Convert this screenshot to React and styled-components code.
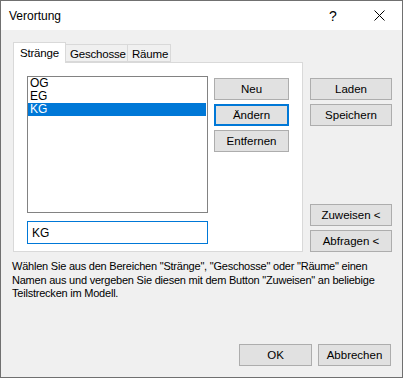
import React from 'react';
import styled, { createGlobalStyle } from 'styled-components';

const Global = createGlobalStyle`
  html, body { margin: 0; padding: 0; background: #fff; }
  body { font-family: "Liberation Sans", Arial, sans-serif; font-size: 11.5px; color: #000; }
  * { box-sizing: border-box; }
`;

const Window = styled.div`
  width: 403px;
  height: 378px;
  border: 1px solid #707070;
  background: #f0f0f0;
  display: flex;
  flex-direction: column;
`;

const TitleBar = styled.div`
  height: 29px;
  background: #fff;
  display: flex;
  align-items: center;
  padding-left: 8px;
`;

const Title = styled.div`
  flex: 1;
  font-size: 12px;
  padding-top: 1px;
`;

const TitleButton = styled.div`
  width: 46px;
  height: 29px;
  display: flex;
  align-items: center;
  justify-content: center;
  font-size: 14px;
`;

const Body = styled.div`
  flex: 1;
  display: flex;
  flex-direction: column;
  padding: 12px 10px 11px 12px;
`;

const MainRow = styled.div`
  display: flex;
  height: 210px;
`;

const TabControl = styled.div`
  width: 290px;
  display: flex;
  flex-direction: column;
`;

const TabStrip = styled.div`
  height: 20px;
  display: flex;
  align-items: flex-end;
  position: relative;
  z-index: 1;
`;

const Tab = styled.div`
  width: ${p => p.$w}px;
  height: ${p => (p.$active ? 21 : 18)}px;
  margin-bottom: ${p => (p.$active ? -1 : 0)}px;
  margin-left: ${p => (p.$first ? 0 : -1)}px;
  border: 1px solid #d9d9d9;
  border-bottom: ${p => (p.$active ? 'none' : '1px solid #d9d9d9')};
  background: ${p => (p.$active ? '#fff' : '#f0f0f0')};
  display: flex;
  align-items: center;
  padding-left: ${p => (p.$active ? 6 : 4)}px;
  padding-top: ${p => (p.$active ? 0 : 1)}px;
  white-space: nowrap;
  letter-spacing: -0.2px;
`;

const Pane = styled.div`
  flex: 1;
  border: 1px solid #d9d9d9;
  background: #fff;
  display: flex;
  padding: 13px 0 7px 13px;
`;

const LeftCol = styled.div`
  width: 181px;
  display: flex;
  flex-direction: column;
  gap: 8px;
`;

const ListBox = styled.div`
  height: 137px;
  border: 1px solid #828282;
  background: #fff;
  padding: 0 1px 0 0;
`;

const ListItem = styled.div`
  height: 13px;
  line-height: 13px;
  padding-left: 2px;
  font-size: 12px;
  background: ${p => (p.$selected ? '#0078d7' : 'transparent')};
  color: ${p => (p.$selected ? '#fff' : '#000')};
`;

const TextBox = styled.div`
  height: 23px;
  border: 1px solid #0078d7;
  background: #fff;
  display: flex;
  align-items: center;
  padding-left: 4px;
  font-size: 12px;
`;

const ButtonCol = styled.div`
  width: 75px;
  margin-left: 6px;
  margin-top: 2px;
  display: flex;
  flex-direction: column;
  gap: 4px;
`;

const Button = styled.div`
  width: ${p => p.$w || 75}px;
  height: 22px;
  border: ${p => (p.$focused ? '2px solid #0078d7' : '1px solid #adadad')};
  background: #e1e1e1;
  display: flex;
  align-items: center;
  justify-content: center;
  white-space: nowrap;
`;

const RightCol = styled.div`
  width: 82px;
  margin-left: 7px;
  padding-top: 36px;
  display: flex;
  flex-direction: column;
  justify-content: space-between;
`;

const ButtonGroup = styled.div`
  display: flex;
  flex-direction: column;
  gap: 4px;
`;

const Description = styled.div`
  margin: 8px 0 0 -1px;
  font-size: 11px;
  letter-spacing: -0.22px;
  line-height: 13.5px;
  white-space: nowrap;
`;

const Footer = styled.div`
  margin-top: auto;
  margin-right: 1px;
  display: flex;
  justify-content: flex-end;
  gap: 6px;
`;

export default function App() {
  return (
    <>
      <Global />
      <Window>
        <TitleBar>
          <Title>Verortung</Title>
          <TitleButton>?</TitleButton>
          <TitleButton>
            <svg width="11" height="11" viewBox="0 0 11 11">
              <path d="M0.5 0.5 L10.5 10.5 M10.5 0.5 L0.5 10.5" stroke="#000" strokeWidth="1" fill="none" />
            </svg>
          </TitleButton>
        </TitleBar>
        <Body>
          <MainRow>
            <TabControl>
              <TabStrip>
                <Tab $active $first $w={53}>Stränge</Tab>
                <Tab $w={63}>Geschosse</Tab>
                <Tab $w={44}>Räume</Tab>
              </TabStrip>
              <Pane>
                <LeftCol>
                  <ListBox>
                    <ListItem>OG</ListItem>
                    <ListItem>EG</ListItem>
                    <ListItem $selected>KG</ListItem>
                  </ListBox>
                  <TextBox>KG</TextBox>
                </LeftCol>
                <ButtonCol>
                  <Button>Neu</Button>
                  <Button $focused>Ändern</Button>
                  <Button>Entfernen</Button>
                </ButtonCol>
              </Pane>
            </TabControl>
            <RightCol>
              <ButtonGroup>
                <Button $w={82}>Laden</Button>
                <Button $w={82}>Speichern</Button>
              </ButtonGroup>
              <ButtonGroup>
                <Button $w={82}>Zuweisen &lt;</Button>
                <Button $w={82}>Abfragen &lt;</Button>
              </ButtonGroup>
            </RightCol>
          </MainRow>
          <Description>
            Wählen Sie aus den Bereichen "Stränge", "Geschosse" oder "Räume" einen<br />
            Namen aus und vergeben Sie diesen mit dem Button "Zuweisen" an beliebige<br />
            Teilstrecken im Modell.
          </Description>
          <Footer>
            <Button $w={73}>OK</Button>
            <Button $w={73}>Abbrechen</Button>
          </Footer>
        </Body>
      </Window>
    </>
  );
}
